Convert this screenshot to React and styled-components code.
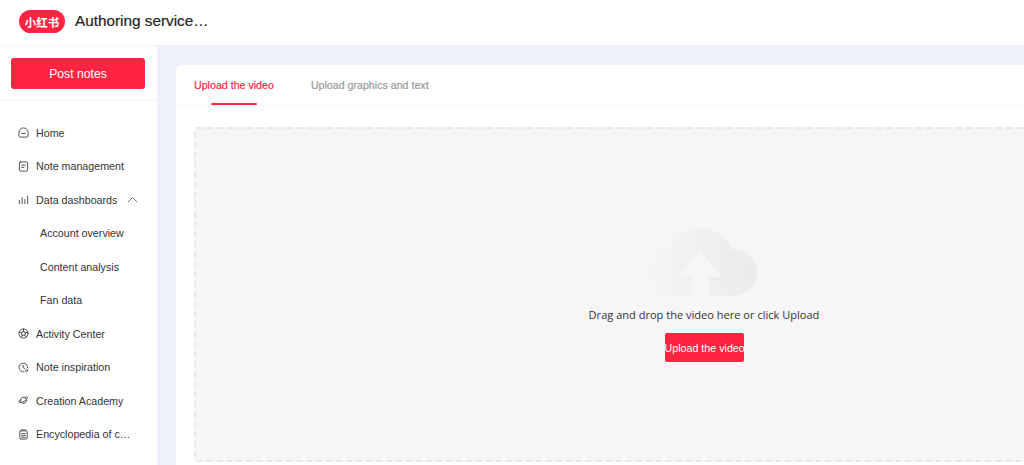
import React from "react";
import styled, { createGlobalStyle } from "styled-components";

const Global = createGlobalStyle`
  html, body { margin: 0; padding: 0; height: 100%; overflow: hidden; background: #fff; }
  body { font-family: "Liberation Sans", Arial, sans-serif; }
  #root { height: 100%; }
`;
const Page = styled.div`
  width: 1024px; height: 465px; overflow: hidden; display: flex; flex-direction: column;
`;
const Header = styled.header`
  height: 45px; flex: none; display: flex; align-items: center; padding-left: 19px; gap: 10px;
  box-sizing: border-box; background: #fff;
`;
const Logo = styled.div`
  width: 46px; height: 23px; border-radius: 12px; background: #ff2442; color: #fff;
  display: flex; align-items: center; justify-content: center; margin-top: -2px;
  font: 700 11.5px "Noto Sans CJK SC", sans-serif; letter-spacing: 0;
`;
const Title = styled.h1`
  margin: 0 0 4px; font-size: 15.3px; font-weight: 400; color: #222; white-space: nowrap;
  -webkit-text-stroke: 0.2px #222;
`;
const Body = styled.div`
  flex: 1; display: flex; min-height: 0;
`;
const Side = styled.aside`
  width: 157px; flex: none; background: #fff; display: flex; flex-direction: column;
  border-top: 1px solid #f6f6f6; box-sizing: border-box;
`;
const PostWrap = styled.div`
  height: 55px; flex: none; box-sizing: border-box; padding: 12px 12px 0 11px;
  border-bottom: 1px solid #f4f4f4;
`;
const PostButton = styled.button`
  width: 100%; height: 31px; border: 0; border-radius: 3px; background: #ff2442; color: #fff;
  font: 400 12.2px "Liberation Sans", sans-serif; padding: 0; display: block;
`;
const Nav = styled.nav`
  display: flex; flex-direction: column; padding-top: 14.8px;
`;
const Item = styled.div`
  height: 33.5px; display: flex; align-items: center; box-sizing: border-box;
  padding-left: ${p => (p.$sub ? "40px" : "18px")}; gap: 7px;
  font-size: 10.7px; color: #333; white-space: nowrap;
  svg { flex: none; }
`;
const Chevron = styled.svg`
  margin-left: 3px;
`;
const Main = styled.main`
  flex: 1; min-width: 0; background: #eef1f9; padding: 20px 0 0 19px; overflow: hidden;
`;
const Card = styled.section`
  width: 1056px; height: 420px; background: #fff; border-radius: 6px 0 0 0;
`;
const Tabs = styled.div`
  height: 41px; box-sizing: border-box; display: flex; gap: 37px; padding-left: 18px;
  border-bottom: 1px solid #f6f6f6;
`;
const Tab = styled.div`
  position: relative; height: 40px; display: flex; align-items: center; font-size: 10.65px;
  -webkit-text-stroke: 0.2px currentColor;
  color: ${p => (p.$active ? "#ff2442" : "#999")}; white-space: nowrap;
  ${p => p.$active && `
    &::after {
      content: ""; position: absolute; left: 17px; bottom: 0; width: 46px; height: 2px;
      background: #ff2442; border-radius: 1px;
    }`}
`;
const DropArea = styled.div`
  margin: 21px 0 0 18px; width: 1020px; height: 335px; box-sizing: border-box;
  background: #f6f6f6; border: 2px dashed #e8e8e8; border-radius: 3px;
  display: flex; flex-direction: column; align-items: center; padding-top: 99px;
`;
const CloudIcon = styled.svg`
  display: block;
`;
const Hint = styled.p`
  margin: 11px 0 0; font: 400 11.05px "Open Sans", "Liberation Sans", sans-serif; color: #333; line-height: 16px;
  white-space: nowrap;
`;
const UploadButton = styled.button`
  margin-top: 10px; width: 79px; height: 29px; padding: 0; border: 0; border-radius: 2px;
  background: #ff2442; color: #fff; font: 400 10.7px "Liberation Sans", sans-serif; white-space: nowrap;
`;

const Ico = ({ children }) => (
  <svg width="11" height="11" viewBox="0 0 12 12" fill="none" stroke="#444" strokeWidth="1" strokeLinecap="round" strokeLinejoin="round">
    {children}
  </svg>
);

const icons = {
  home: <Ico><path d="M1 6a5 5 0 0 1 10 0v3.500a1.500 1.500 0 0 1-1.500 1.500h-7A1.500 1.500 0 0 1 1 9.500z" /><path d="M4 7h4" /></Ico>,
  note: <Ico><rect x="1.500" y="1" width="9" height="10" rx="1.200" /><path d="M4 4.500h4M4 7h2.500" /></Ico>,
  chart: <Ico><path d="M1.500 7v3.500M4.500 4v6.500M7.500 6v4.500M10.500 2.500v8" /></Ico>,
  activity: <Ico><circle cx="6" cy="6" r="5" /><circle cx="6" cy="6" r="2.200" /><path d="M6 1v2.800M10.700 4.500l-2.600.8M9 10l-1.700-2.200M3 10l1.700-2.200M1.300 4.500l2.600.8" /></Ico>,
  inspire: <Ico><path d="M10.500 6.500A4.700 4.700 0 1 0 6.500 10.700" /><path d="M5.500 3.500V6l1.800 1" /><circle cx="9.300" cy="9.300" r="1.200" /></Ico>,
  academy: <Ico><path d="M2.800 6.800a3.300 3.300 0 0 1 6-2.700" /><path d="M9.300 5.500a3.300 3.300 0 0 1-6 2.300" /><path d="M3.300 4.600C1.500 5.600.5 7 1 7.800c.6 1 3.200.4 5.600-1s4.300-3.300 3.700-4.200c-.4-.6-1.500-.6-2.800-.1" /></Ico>,
  book: <Ico><rect x="2" y="2" width="8" height="9" rx="1" /><path d="M3.500 1h5M4 5h4M4 7h4M4 9h4" /></Ico>,
};

export default function App() {
  return (
    <Page>
      <Global />
      <Header>
        <Logo>小红书</Logo>
        <Title>Authoring service…</Title>
      </Header>
      <Body>
        <Side>
          <PostWrap><PostButton>Post notes</PostButton></PostWrap>
          <Nav>
            <Item>{icons.home}Home</Item>
            <Item>{icons.note}Note management</Item>
            <Item>
              {icons.chart}Data dashboards
              <Chevron width="11" height="7" viewBox="0 0 11 7" fill="none" stroke="#777" strokeWidth="1"><path d="M1 6l4.500-4.500L10 6" /></Chevron>
            </Item>
            <Item $sub>Account overview</Item>
            <Item $sub>Content analysis</Item>
            <Item $sub>Fan data</Item>
            <Item>{icons.activity}Activity Center</Item>
            <Item>{icons.inspire}Note inspiration</Item>
            <Item>{icons.academy}Creation Academy</Item>
            <Item>{icons.book}Encyclopedia of c…</Item>
          </Nav>
        </Side>
        <Main>
          <Card>
            <Tabs>
              <Tab $active>Upload the video</Tab>
              <Tab>Upload graphics and text</Tab>
            </Tabs>
            <DropArea>
              <CloudIcon width="106" height="68" viewBox="0 0 106 68">
                <defs>
                  <linearGradient id="cloudFill" x1="0" x2="1" y1="0" y2="0">
                    <stop offset="0" stopColor="#f5f5f5" />
                    <stop offset="0.55" stopColor="#efefef" />
                    <stop offset="1" stopColor="#ebebeb" />
                  </linearGradient>
                </defs>
                <path fill="url(#cloudFill)" d="M23 67.500C10 67.500 0 57 0 44 0 31 9 21 19.500 20 24 8 36 0 50 0c14 0 26 8 31 21 14-.5 25 10 25 23 0 13.500-11 23.500-24 23.500z" />
                <path fill="#f6f6f6" d="M41 68V49H30c-1.500 0-2-1-1-2.300L47 25c1.200-1.500 3.300-1.500 4.500 0l18 21.700c1 1.300.5 2.300-1 2.300H58.500V68z" />
              </CloudIcon>
              <Hint>Drag and drop the video here or click Upload</Hint>
              <UploadButton>Upload the video</UploadButton>
            </DropArea>
          </Card>
        </Main>
      </Body>
    </Page>
  );
}
